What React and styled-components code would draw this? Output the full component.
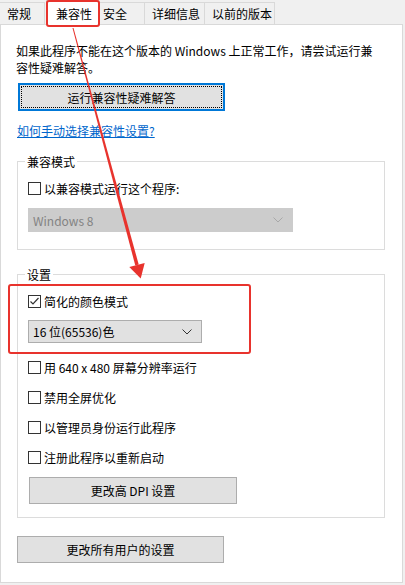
import React from "react";
import styled, { createGlobalStyle } from "styled-components";

const GlobalStyle = createGlobalStyle`
body {
  margin: 0;
  background: #f0f0f0;
  font-family: "Noto Sans CJK SC", "Noto Sans", sans-serif;
  font-size: 12px;
  color: #000;
}
`

const Window = styled.div`
position: relative;
width: 405px;
height: 585px;
overflow: hidden;
`

const TabBar = styled.div`
display: flex;
align-items: flex-end;
height: 24px;
`

const Tab = styled.div`
box-sizing: border-box;
width: ${(p) => p.w}px;
height: ${(p) => (p.active ? 25 : 22)}px;
margin-bottom: ${(p) => (p.active ? -1 : 0)}px;
display: flex;
align-items: center;
padding-left: ${(p) => p.pad}px;
background: ${(p) => (p.active ? "#fff" : "#f0f0f0")};
border: 1px solid #d9d9d9;
border-bottom: none;
border-left-width: ${(p) => (p.first ? 0 : 1)}px;
margin-left: ${(p) => (p.active ? 1 : -1)}px;
position: relative;
z-index: ${(p) => (p.active ? 2 : 1)};
line-height: 17px;
`

const Panel = styled.div`
box-sizing: border-box;
width: 403px;
height: 559px;
background: #fff;
border: 1px solid #d9d9d9;
padding: 17px 18px 0 15px;
display: flex;
flex-direction: column;
align-items: flex-start;
`

const Intro = styled.p`
margin: 0;
line-height: 17px;
width: 365px;
`

const Button = styled.button`
box-sizing: border-box;
position: relative;
width: ${(p) => p.w}px;
height: ${(p) => p.h || 27}px;
margin-top: ${(p) => p.mt}px;
margin-left: ${(p) => p.ml || 1}px;
background: #e1e1e1;
border: ${(p) => (p.focused ? "2px solid #0078d7" : "1px solid #adadad")};
font: inherit;
color: #000;
padding: 0;
&::after {
  content: "";
  display: ${(p) => (p.focused ? "block" : "none")};
  position: absolute;
  inset: 1px;
  border: 1px dotted #000;
}
`

const Link = styled.a`
margin-top: 11px;
line-height: 17px;
color: #0066cc;
text-decoration: underline;
margin-left: 1px;
`

const Group = styled.div`
box-sizing: border-box;
width: 368px;
margin-top: ${(p) => p.mt}px;
margin-left: 1px;
border: 1px solid #dcdcdc;
padding: 0 10px ${(p) => p.pb}px 10px;
display: flex;
flex-direction: column;
align-items: flex-start;
`

const Legend = styled.span`
margin: -9px 0 0 -3px;
padding: 0 2px;
background: #fff;
line-height: 17px;
`

const CheckRow = styled.label`
display: flex;
align-items: center;
gap: 3px;
height: 17px;
margin-top: ${(p) => p.mt}px;
line-height: 17px;
`

const Box = styled.span`
box-sizing: border-box;
width: 13px;
height: 13px;
border: 1px solid #333;
background: #fff;
display: flex;
align-items: center;
justify-content: center;
`

const Select = styled.div`
box-sizing: border-box;
width: ${(p) => p.w}px;
height: ${(p) => p.h}px;
margin-top: ${(p) => p.mt}px;
display: flex;
align-items: center;
justify-content: space-between;
padding: 0 9px 0 4px;
background: ${(p) => (p.disabled ? "#cccccc" : "#e1e1e1")};
border: 1px solid ${(p) => (p.disabled ? "#cccccc" : "#adadad")};
color: ${(p) => (p.disabled ? "#838383" : "#000")};
`

const Highlight = styled.div`
position: absolute;
left: ${(p) => p.x}px;
top: ${(p) => p.y}px;
width: ${(p) => p.w}px;
height: ${(p) => p.h}px;
box-sizing: border-box;
border: 2px solid #e8332d;
border-radius: 3px;
pointer-events: none;
z-index: 5;
`

const ArrowLayer = styled.svg`
position: absolute;
left: 0;
top: 0;
pointer-events: none;
z-index: 6;
`

const Chevron = ({ color }) => (
  <svg width="10" height="6" viewBox="0 0 10 6">
    <path d="M0.5 0.5 L5 5 L9.5 0.5" fill="none" stroke={color} strokeWidth="1" />
  </svg>
)

const Check = ({ checked, label, mt }) => (
  <CheckRow mt={mt}>
    <Box>
      {checked && (
        <svg width="11" height="11" viewBox="0 0 11 11">
          <path d="M1.5 5.5 L4 8 L9.5 2" fill="none" stroke="#333" strokeWidth="1.2" />
        </svg>
      )}
    </Box>
    {label}
  </CheckRow>
)

const tabs = [
  { label: "常规", w: 46, pad: 8, first: true },
  { label: "兼容性", w: 53, pad: 9, active: true },
  { label: "安全", w: 47, pad: 4 },
  { label: "详细信息", w: 61, pad: 7 },
  { label: "以前的版本", w: 71, pad: 7 },
]

export default function App() {
  return (
    <Window>
      <GlobalStyle />
      <TabBar>
        {tabs.map((t) => (
          <Tab key={t.label} {...t}>{t.label}</Tab>
        ))}
      </TabBar>
      <Panel>
        <Intro>如果此程序不能在这个版本的 Windows 上正常工作，请尝试运行兼容性疑难解答。</Intro>
        <Button focused w={207} h={28} mt={7} ml={2}>运行兼容性疑难解答</Button>
        <Link>如何手动选择兼容性设置?</Link>

        <Group mt={22} pb={17}>
          <Legend>兼容模式</Legend>
          <Check label="以兼容模式运行这个程序:" mt={10} />
          <Select disabled w={265} h={24} mt={11}>
            Windows 8
            <Chevron color="#a8a8a8" />
          </Select>
        </Group>

        <Group mt={24} pb={13}>
          <Legend>设置</Legend>
          <Check checked label="简化的颜色模式" mt={10} />
          <Select w={174} h={23} mt={10}>
            16 位(65536)色
            <Chevron color="#333" />
          </Select>
          <Check label="用 640 x 480 屏幕分辨率运行" mt={16} />
          <Check label="禁用全屏优化" mt={13} />
          <Check label="以管理员身份运行此程序" mt={13} />
          <Check label="注册此程序以重新启动" mt={13} />
          <Button w={208} mt={11} ml={1}>更改高 DPI 设置</Button>
        </Group>

        <Button w={207} mt={18} ml={1}>更改所有用户的设置</Button>
      </Panel>

      <Highlight x={46} y={0} w={54} h={27} />
      <Highlight x={8} y={284} w={243} h={70} />
      <ArrowLayer width="405" height="585">
        <polygon points="72.5,28.1 73.5,27.9 138.7,264.5 135.3,265.5" fill="#e8332d" />
        <polygon points="129.3,267.1 144.7,262.9 140.7,278.5" fill="#e8332d" />
      </ArrowLayer>
    </Window>
  )
}
